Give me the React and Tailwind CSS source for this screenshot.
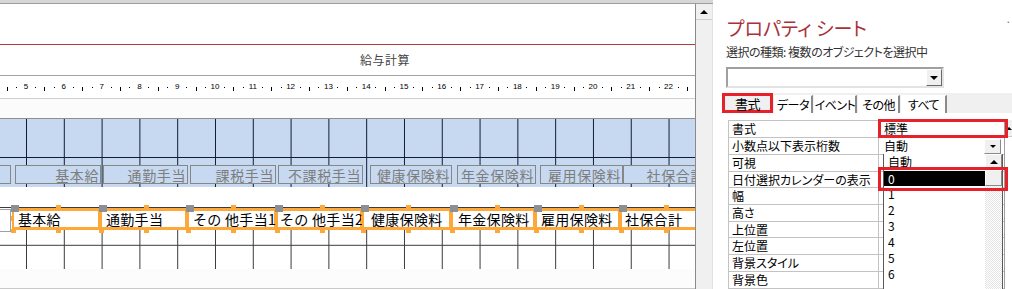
// Access-style report design view with the property sheet open

const jp = "font-['Noto_Sans_CJK_JP','Noto_Sans_CJK_SC',sans-serif]";

const rulerMarks = [4, 5, 6, 7, 8, 9, 10, 11, 12, 13, 14, 15, 16, 17, 18, 19, 20, 21, 22];

const headerLabels = [
  { text: '', cls: 'w-[11px] border-l-0' },
  { text: '基本給', cls: 'ml-[4px] w-[86px]' },
  { text: '通勤手当', cls: 'ml-[2px] w-[85px]' },
  { text: '課税手当', cls: 'ml-[2px] w-[86px]' },
  { text: '不課税手当', cls: 'ml-[2px] w-[85px]' },
  { text: '健康保険料', cls: 'ml-[7px] w-[82px]' },
  { text: '年金保険料', cls: 'ml-[5px] w-[79px]' },
  { text: '雇用保険料', cls: 'ml-[4px] w-[83px]' },
  { text: '社保合計', cls: 'ml-[0px] w-[84px] shrink-0' },
];

const fields = [
  { text: '基本給', cls: 'w-[88px] pl-[4px]' },
  { text: '通勤手当', cls: 'w-[87px] pl-[4px]' },
  { text: 'その 他手当1', cls: 'w-[89px] pl-[4px]' },
  { text: 'その 他手当2', cls: 'w-[86px] pl-[2px]' },
  { text: '健康保険料', cls: 'w-[89px] pl-[7px]' },
  { text: '年金保険料', cls: 'w-[84px] pl-[5px]' },
  { text: '雇用保険料', cls: 'w-[85px] pl-[4px]' },
  { text: '社保合計', cls: 'w-[90px] pl-[3px] shrink-0' },
];

const props = [
  { name: '書式', value: '標準', h: 'h-[17px]' },
  { name: '小数点以下表示桁数', value: '自動', h: 'h-[17px]', drop: true },
  { name: '可視', value: '', h: 'h-[17px]' },
  { name: '日付選択カレンダーの表示', value: '', h: 'h-[16px]' },
  { name: '幅', value: '', h: 'h-[17px]' },
  { name: '高さ', value: '', h: 'h-[17px]' },
  { name: '上位置', value: '', h: 'h-[16px]' },
  { name: '左位置', value: '', h: 'h-[17px]' },
  { name: '背景スタイル', value: '', h: 'h-[17px]' },
  { name: '背景色', value: '', h: 'h-[17px]' },
];

const listItems = ['1', '2', '3', '4', '5', '6'];

function Ruler() {
  return (
    <div className="flex h-[24px] shrink-0 items-center overflow-hidden border-y border-t-[#a3a3a3] border-b-[#cfcfcf] bg-white font-['Liberation_Sans',sans-serif] text-[8px] leading-none text-black">
      <div className="-ml-[16.5px] flex">
        {rulerMarks.map((n) => (
          <div key={n} className="flex w-[37.8px] shrink-0 items-center">
            <span className="flex w-1/4 justify-center">{n > 4 ? n : ''}</span>
            <span className="flex w-1/4 justify-center"><span className="h-px w-px bg-black" /></span>
            <span className="flex w-1/4 justify-center pt-[4px]"><span className="h-[4px] w-px bg-black" /></span>
            <span className="flex w-1/4 justify-center"><span className="h-px w-px bg-black" /></span>
          </div>
        ))}
      </div>
    </div>
  );
}

function TextBox({ text, cls }) {
  return (
    <div className={`relative flex h-[22px] shrink-0 items-center whitespace-nowrap border-x-[2px] border-y-[3px] border-[#ffa83a] bg-white text-[14px] leading-none tracking-[0.3px] text-black ${cls}`}>
      {text}
      <span className="absolute -left-[3px] -top-[6px] h-[7px] w-[8px] bg-[#8b8f96]" />
      <span className="absolute -top-[6px] left-[42px] h-[4px] w-[5px] bg-[#ffa83a]" />
      <span className="absolute -bottom-[6px] left-[42px] h-[4px] w-[5px] bg-[#ffa83a]" />
      <span className="absolute -bottom-[6px] -left-[3px] h-[4px] w-[5px] bg-[#ffa83a]" />
      <span className="absolute -left-[3px] top-[5px] h-[5px] w-[3px] bg-[#ffa83a]" />
    </div>
  );
}

function Tri({ down }) {
  return down ? (
    <span className="h-0 w-0 border-x-[3px] border-t-[3px] border-x-transparent border-t-black" />
  ) : (
    <span className="h-0 w-0 border-x-[4px] border-b-[4px] border-x-transparent border-b-black" />
  );
}

export default function App() {
  return (
    <div className={`flex h-[289px] w-[1012px] overflow-hidden bg-white ${jp}`}>
      {/* design surface with its scrollbar */}
      <div className="flex w-[713px] shrink-0 flex-col">
        <div className="h-[4px] shrink-0 border-b border-[#9e9e9e] bg-[#d6d6d6]" />
        <div className="flex min-h-0 flex-1">
          <div className="flex w-[695px] shrink-0 flex-col overflow-hidden">
            {/* page header */}
            <div className="h-[71px] shrink-0 bg-white">
              <div className="mt-[40px] h-px bg-[#b8373a]" />
              <div className="pl-[360px] pt-[8px] text-[12px] leading-[14px] tracking-[0.5px] text-[#444]">給与計算</div>
            </div>

            <Ruler />

            <div className="h-[20px] shrink-0 border-b border-[#8f8f8f] bg-[#fbfbfb]" />

            {/* report header band */}
            <div className="h-[68px] shrink-0 bg-[#c6d9f0] [background-image:linear-gradient(to_right,#0e1c36_1px,transparent_1px),linear-gradient(to_bottom,transparent_38px,#0e1c36_38px,#0e1c36_39px,transparent_39px)] [background-position:26px_0,0_0] [background-size:37.8px_100%,100%_100%]">
              <div className="mt-[46px] flex h-[19px]">
                {headerLabels.map((l, i) => (
                  <div
                    key={i}
                    className={`flex h-[19px] shrink-0 items-center justify-end whitespace-nowrap border border-[#878787] bg-[#c6d9f0] pr-[1px] text-[14px] leading-none tracking-[0.6px] text-[#7d7d7d] ${l.cls}`}
                  >
                    {l.text}
                  </div>
                ))}
              </div>
            </div>

            <div className="h-[20px] shrink-0 bg-white" />

            {/* detail section */}
            <div className="h-[62px] shrink-0 bg-white [background-image:linear-gradient(to_right,#3a3a3a_1px,transparent_1px),linear-gradient(to_bottom,#3a3a3a_1px,transparent_1px)] [background-position:26px_0,0_0] [background-size:37.8px_100%,100%_37.8px]">
              <div className="mt-[1px] flex items-start">
                <div className="mt-px h-[23px] w-[11px] shrink-0 border-y border-r border-[#a0a0a0] bg-white" />
                <div className="ml-px flex">
                  {fields.map((f, i) => (
                    <TextBox key={i} {...f} />
                  ))}
                </div>
              </div>
            </div>

            <div className="h-[20px] shrink-0 border-b border-[#c9c9c9] bg-[#fcfcfc]" />
          </div>

          <div className="flex w-[18px] shrink-0 flex-col border-x border-l-[#8a8a8a] border-r-[#e2e2e2] bg-[#f0f0f0]">
            <div className="flex h-[16px] items-center justify-center border-b border-[#cfcfcf]">
              <Tri />
            </div>
          </div>
        </div>
      </div>

      {/* property sheet */}
      <div className="flex w-[299px] shrink-0 flex-col bg-white text-black">
        <div className="flex items-start justify-between">
          <div className="pl-[14px] pt-[17px] text-[19px] leading-[21px] text-[#a8323a] [font-feature-settings:'palt']">プロパティ シート</div>
          <div className="pr-[1px] pt-[14px] text-[10px] text-[#666]">·</div>
        </div>
        <div className="mt-[7px] whitespace-nowrap pl-[13px] text-[12px] leading-[14px] tracking-[-0.5px] text-[#333] [font-feature-settings:'palt']">選択の種類: 複数のオブジェクトを選択中</div>

        <div className="ml-[13px] mt-[8px] flex h-[25px] w-[218px] border-2 border-b-[#e3e3e3] border-l-[#a0a0a0] border-r-[#e3e3e3] border-t-[#a0a0a0] bg-white">
          <div className="flex-1" />
          <div className="flex w-[16px] items-center justify-center border border-b-[#696969] border-l-white border-r-[#696969] border-t-white bg-[#f0f0f0]">
            <span className="h-0 w-0 border-x-[4px] border-t-[4px] border-x-transparent border-t-black" />
          </div>
        </div>

        {/* tabs */}
        <div className="ml-[9px] mt-[5px] flex h-[21px] items-end whitespace-nowrap bg-[#f0f0f0] text-[12px] leading-none tracking-[-0.5px] [font-feature-settings:'palt']">
          <div className="flex h-[20px] w-[51px] items-center justify-center border-[3px] border-[#e8202a] bg-[#f0f0f0] text-[13px]">書式</div>
          <div className="ml-[1px] flex h-[18px] w-[39px] items-center justify-center border-l border-r-2 border-t border-l-white border-r-[#8a8a8a] border-t-white bg-white">データ</div>
          <div className="ml-[1px] flex h-[18px] w-[43px] items-center justify-center border-l border-r-2 border-t border-l-white border-r-[#8a8a8a] border-t-white bg-white">イベント</div>
          <div className="ml-[1px] flex h-[18px] w-[42px] items-center justify-center border-l border-r-2 border-t border-l-white border-r-[#8a8a8a] border-t-white bg-white">その他</div>
          <div className="ml-[1px] flex h-[18px] w-[46px] items-center justify-center border-l border-r-2 border-t border-l-white border-r-[#8a8a8a] border-t-white bg-white">すべて</div>
        </div>

        {/* property grid */}
        <div className="mt-[7px] flex">
          <div className="relative ml-[15px] w-[276px] shrink-0 border-l border-t border-[#c3c3c3]">
            {props.map((p, i) => (
              <div key={i} className={`flex border-b border-[#c3c3c3] text-[12px] leading-none ${p.h}`}>
                <div className="flex w-[150px] shrink-0 items-center whitespace-nowrap border-r border-[#c3c3c3] pl-[3px] [font-feature-settings:'palt']">{p.name}</div>
                <div className="flex flex-1 items-center pl-[5px]">
                  <span className="flex-1">{p.value}</span>
                  {p.drop && (
                    <span className="mr-[3px] flex h-[15px] w-[17px] items-center justify-center border border-b-[#8a8a8a] border-l-white border-r-[#8a8a8a] border-t-white bg-[#f0f0f0]">
                      <Tri down />
                    </span>
                  )}
                </div>
              </div>
            ))}

            {/* open dropdown list */}
            <div className="absolute left-[154px] top-[33px] flex h-[140px] w-[120px] border-x border-[#5a5a5a] bg-white text-[12px] leading-none">
              <div className="flex flex-1 flex-col">
                <div className="flex h-[16px] items-center pl-[4px]">自動</div>
                <div className="mt-px flex h-[15px] items-center bg-black pl-[4px] text-white">0</div>
                {listItems.map((n) => (
                  <div key={n} className="flex h-[16px] items-center pl-[4px]">{n}</div>
                ))}
              </div>
              <div className="flex w-[17px] flex-col bg-white [background-image:repeating-conic-gradient(#e4e4e4_0_25%,#ffffff_0_50%)] [background-size:2px_2px]">
                <div className="flex h-[16px] items-center justify-center border border-b-[#8a8a8a] border-l-white border-r-[#8a8a8a] border-t-white bg-[#f0f0f0]">
                  <Tri />
                </div>
                <div className="h-[16px] border border-b-[#8a8a8a] border-l-white border-r-[#8a8a8a] border-t-white bg-[#f0f0f0]" />
              </div>
            </div>

            {/* highlight boxes */}
            <div className="absolute -top-[2px] left-[149px] h-[19px] w-[130px] border-[3px] border-[#e8202a]" />
            <div className="absolute left-[149px] top-[46px] h-[24px] w-[130px] border-[3px] border-[#e8202a]" />
          </div>

          <div className="flex flex-1 flex-col border-l border-[#a0a0a0] bg-white">
            <div className="flex h-[17px] items-center justify-end border-b border-[#c8c8c8] bg-[#f0f0f0]">
              <span className="h-0 w-0 border-x-[3px] border-b-[3px] border-x-transparent border-b-black" />
            </div>
          </div>
        </div>
      </div>
    </div>
  );
}
